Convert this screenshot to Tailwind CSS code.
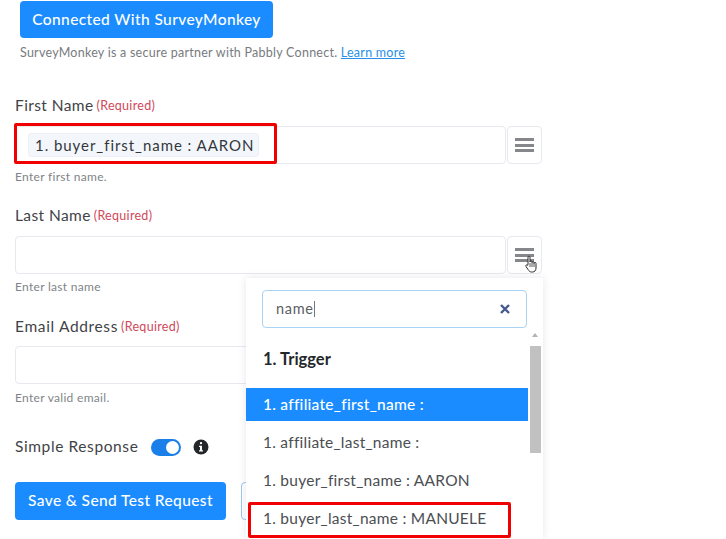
<!DOCTYPE html>
<html>
<head>
<meta charset="utf-8">
<script src="https://cdn.jsdelivr.net/npm/@tailwindcss/browser@4"></script>
</head>
<body class="bg-white">
<div class="relative w-[726px] h-[539px] overflow-hidden font-['Lato',sans-serif] text-[#3f4347]">
  <div class="pl-[15px] pt-[1px] w-[542px]">
    <div class="pl-[5px]">
      <div class="w-[253px] h-[37px] rounded-[4px] bg-[#1a8cff] text-white flex items-center justify-center text-[15.500px] font-medium tracking-[0.4px]">Connected With SurveyMonkey</div>
      <p class="mt-[6px] text-[12.500px] leading-[17px] text-[#777b80] tracking-[0.25px]">SurveyMonkey is a secure partner with Pabbly Connect. <span class="text-[#2a8fe8] underline">Learn more</span></p>
    </div>

    <div class="mt-[35px] h-[20px] flex items-center gap-[3px] text-[15.500px] tracking-[0.4px]">First Name <span class="text-[12.500px] tracking-[0.3px] text-[#d0485a]">(Required)</span></div>
    <div class="mt-[10px] flex h-[38px] gap-[1px]">
      <div class="flex-1 border border-[#e8e9ee] rounded-[4px] flex items-center pl-[12px]">
        <span class="h-[24px] w-[231px] rounded-[3px] bg-[#f3f7fc] border border-[#edf1f7] flex items-center pl-[6px] text-[15px] tracking-[0.95px] text-[#33373b] whitespace-nowrap">1. buyer_first_name : AARON</span>
      </div>
      <div class="w-[35px] border border-[#e8e9ee] rounded-[4px] flex flex-col items-center justify-center gap-[2.500px]">
        <span class="w-[19px] h-[3px] bg-[#85878a]"></span><span class="w-[19px] h-[3px] bg-[#85878a]"></span><span class="w-[19px] h-[3px] bg-[#85878a]"></span>
      </div>
    </div>
    <p class="mt-[4px] h-[17px] text-[12px] leading-[17px] text-[#808488] tracking-[0.3px]">Enter first name.</p>

    <div class="mt-[21px] h-[20px] flex items-center gap-[3px] text-[15.500px] tracking-[0.4px]">Last Name <span class="text-[12.500px] tracking-[0.3px] text-[#d0485a]">(Required)</span></div>
    <div class="mt-[10px] flex h-[38px] gap-[1px]">
      <div class="flex-1 border border-[#e8e9ee] rounded-[4px]"></div>
      <div class="w-[35px] border border-[#e8e9ee] rounded-[4px] flex flex-col items-center justify-center gap-[2.500px]">
        <span class="w-[19px] h-[3px] bg-[#85878a]"></span><span class="w-[19px] h-[3px] bg-[#85878a]"></span><span class="w-[19px] h-[3px] bg-[#85878a]"></span>
      </div>
    </div>
    <p class="mt-[4px] h-[17px] text-[12px] leading-[17px] text-[#808488] tracking-[0.3px]">Enter last name</p>

    <div class="mt-[22px] h-[20px] flex items-center gap-[3px] text-[15.500px] tracking-[0.65px]">Email Address <span class="text-[12.500px] tracking-[0.3px] text-[#d0485a]">(Required)</span></div>
    <div class="mt-[9px] flex h-[38px] gap-[1px]">
      <div class="flex-1 border border-[#e8e9ee] rounded-[4px]"></div>
      <div class="w-[35px]"></div>
    </div>
    <p class="mt-[5px] h-[17px] text-[12px] leading-[17px] text-[#808488] tracking-[0.3px]">Enter valid email.</p>

    <div class="mt-[31px] h-[20px] flex items-center text-[15.500px] tracking-[0.6px]">
      <span>Simple Response</span>
      <span class="ml-[13px] w-[30px] h-[17px] rounded-full bg-[#1a7fe8] flex items-center justify-end pr-[2px]"><span class="w-[13px] h-[13px] rounded-full bg-white"></span></span>
      <svg class="ml-[12px]" width="16" height="16" viewBox="0 0 16 16"><circle cx="8" cy="8" r="7.500" fill="#23262a"/><rect x="6.900" y="3" width="2.200" height="2.200" rx="1" fill="#fff"/><path d="M6 6.700h3v4.600h1v1.200H6v-1.200h1V7.900H6z" fill="#fff"/></svg>
    </div>

    <div class="mt-[25px] flex gap-[15px]">
      <div class="w-[211px] h-[38px] rounded-[4px] bg-[#1a8cff] text-white flex items-center justify-center text-[15.500px] font-medium tracking-[0.4px]">Save &amp; Send Test Request</div>
      <div class="w-[40px] h-[38px] rounded-[4px] border border-[#9cc6ee]"></div>
    </div>
  </div>

  <!-- cursor -->
  <svg class="absolute left-[524px] top-[255px]" width="15" height="18" viewBox="0 0 15 18"><path d="M4 9V2.200c0-1.400 2-1.400 2 0V7c0-1.200 2-1.200 2 0v.6c0-1.200 2-1.200 2 0v.7c0-1.100 2-1.100 2 0V13c0 2.500-1.500 4-3.500 4H7.500C6 17 5 16 4 14.500L2 11.500c-.8-1.300 .8-2.300 1.700-1.200z" fill="#fff" stroke="#2b2b2b" stroke-width="1"/><path d="M6 8v4M8 8v4M10 8v4" stroke="#2b2b2b" stroke-width=".8"/></svg>

  <!-- dropdown -->
  <div class="absolute left-[246px] top-[278px] w-[297px] h-[261px] bg-white shadow-[0_0_8px_rgba(60,60,90,0.12)]">
    <div class="pl-[16px] pr-[16px] pt-[12px]">
      <div class="h-[38px] rounded-[4px] border border-[#a9d3f5] flex items-center justify-between pl-[13px] pr-[15px]">
        <span class="text-[14.500px] tracking-[0.7px] text-[#5a5e63] border-r border-[#777] leading-[16px]">name</span>
        <svg width="12" height="12" viewBox="0 0 12 12"><path d="M2 2l8 8M10 2l-8 8" stroke="#44598c" stroke-width="2.400"/></svg>
      </div>
    </div>
    <div class="flex">
      <div class="w-[282px]">
        <div class="h-[60px] pl-[17px] pt-[2px] flex items-center text-[16.500px] font-bold text-[#24272a]">1. Trigger</div>
        <div class="h-[33px] pl-[17px] flex items-center bg-[#1a8cff] text-white text-[15.500px] font-medium tracking-[0.25px]">1. affiliate_first_name :</div>
        <div class="h-[38px] pt-[5px] pl-[17px] flex items-center text-[15.500px] tracking-[0.25px] text-[#4b4e52]">1. affiliate_last_name :</div>
        <div class="h-[38px] pt-[5px] pl-[17px] flex items-center text-[15.500px] tracking-[0.25px] text-[#4b4e52]">1. buyer_first_name : AARON</div>
        <div class="h-[38px] pt-[5px] pl-[17px] flex items-center text-[15.500px] tracking-[0.25px] text-[#4b4e52]">1. buyer_last_name : MANUELE</div>
      </div>
      <div class="w-[12px] ml-[1px] mt-[4px] flex flex-col items-center">
        <span class="mt-[1px] w-0 h-0 border-x-[3px] border-x-transparent border-b-[4px] border-b-[#b4b4b4]"></span>
        <span class="mt-[9px] w-[11px] h-[107px] bg-[#c1c1c1]"></span>
      </div>
    </div>
  </div>

  <!-- annotations -->
  <div class="absolute left-[14px] top-[123px] w-[263px] h-[41px] border-[3px] border-[#f00000] rounded-[2px]"></div>
  <div class="absolute left-[248px] top-[502px] w-[263px] h-[36px] border-[3px] border-[#f00000] rounded-[2px]"></div>
</div>
</body>
</html>
